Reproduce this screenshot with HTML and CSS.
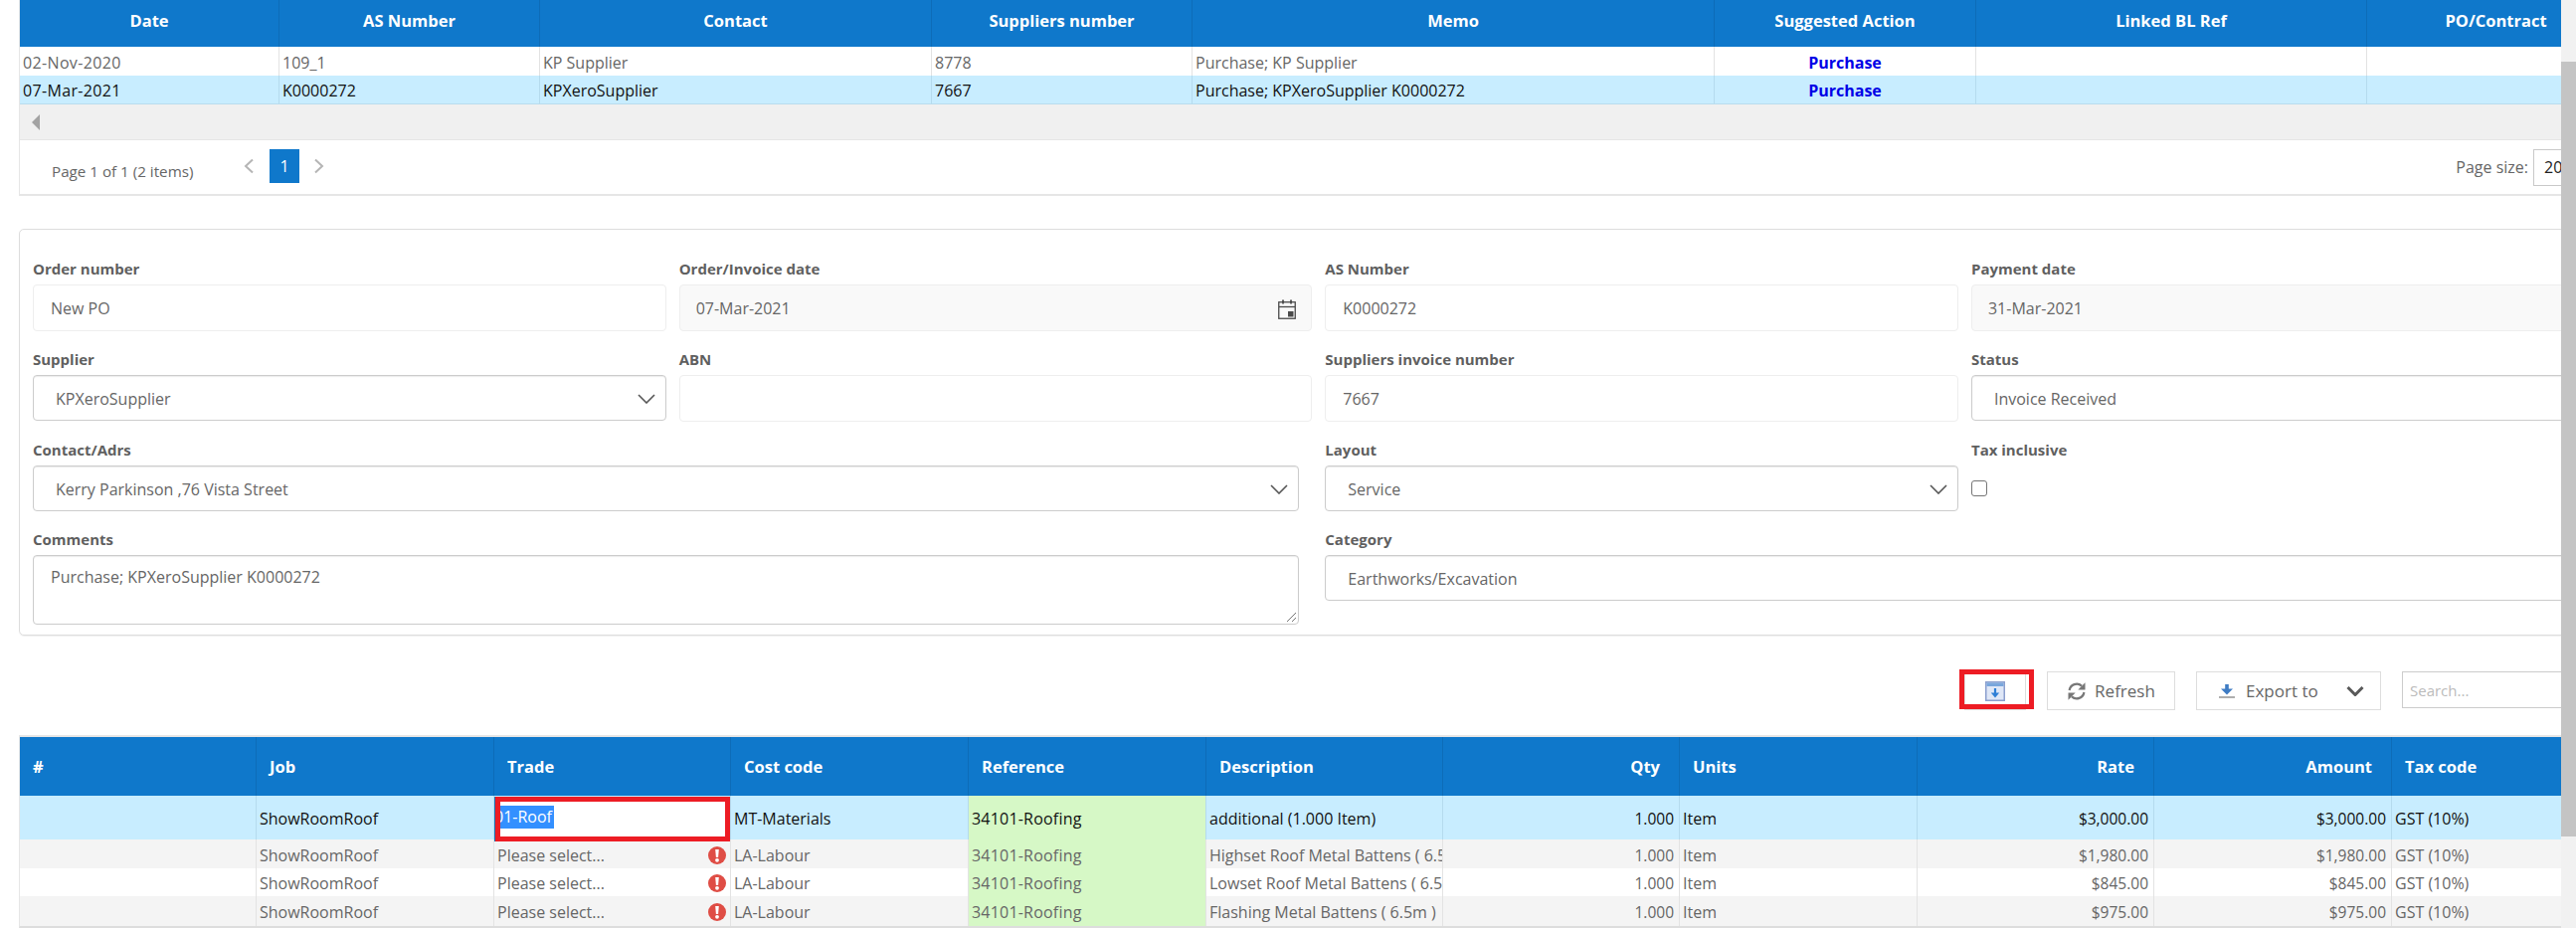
FILE: index.html
```html
<!DOCTYPE html>
<html lang="en">
<head>
<meta charset="utf-8">
<title>Purchase order</title>
<link rel="stylesheet" href="styles.css">
</head>
<body>
<div class="app">
  <main class="page">
    <section class="top-grid">
      <div class="row top-cols head head-top">
        <div class="c center">Date</div><div class="c center">AS Number</div><div class="c center">Contact</div><div class="c center">Suppliers number</div><div class="c center">Memo</div><div class="c center">Suggested Action</div><div class="c center">Linked BL Ref</div><div class="c center">PO/Contract</div>
      </div>
      <div class="row top-cols body-row plain r29">
        <div class="c date">02-Nov-2020</div><div class="c">109_1</div><div class="c">KP Supplier</div><div class="c">8778</div><div class="c">Purchase; KP Supplier</div><div class="c center action">Purchase</div><div class="c"></div><div class="c"></div>
      </div>
      <div class="row top-cols body-row selected r29 last">
        <div class="c date">07-Mar-2021</div><div class="c">K0000272</div><div class="c">KPXeroSupplier</div><div class="c">7667</div><div class="c">Purchase; KPXeroSupplier K0000272</div><div class="c center action">Purchase</div><div class="c"></div><div class="c"></div>
      </div>
      <div class="hscroll"><span class="tri"></span></div>
      <div class="pager">
        <span class="pager-info">Page 1 of 1 (2 items)</span>
        <svg class="pg-chev" viewBox="0 0 12 16"><path d="M10 1.5L3 8l7 6.5"/></svg>
        <span class="pg-num">1</span>
        <svg class="pg-chev" viewBox="0 0 12 16"><path d="M2 1.5L9 8l-7 6.5"/></svg>
        <span class="pg-size">Page size:</span>
        <span class="pg-select">20</span>
      </div>
    </section>

    <section class="card">
      <div class="field"><label>Order number</label><div class="inp h47 plainbox">New PO</div></div>
      <div class="field"><label>Order/Invoice date</label><div class="inp h47 disabled">07-Mar-2021
        <svg class="cal" viewBox="0 0 18 20"><rect x="0.75" y="2.75" width="16.5" height="16.5" fill="none" stroke="#4a4a4a" stroke-width="1.3"/><path d="M1 7.5h16" stroke="#4a4a4a" stroke-width="1.3"/><path d="M5 0.5v4M13 0.5v4" stroke="#4a4a4a" stroke-width="1.8"/><rect x="10" y="12" width="5.5" height="5.5" fill="#4a4a4a"/></svg>
      </div></div>
      <div class="field"><label>AS Number</label><div class="inp h47 plainbox">K0000272</div></div>
      <div class="field"><label>Payment date</label><div class="inp h47 disabled">31-Mar-2021</div></div>

      <div class="field"><label>Supplier</label><div class="inp h46 sel">KPXeroSupplier<svg class="chev" viewBox="0 0 18 10"><path d="M1 1l8 8 8-8"/></svg></div></div>
      <div class="field"><label>ABN</label><div class="inp h47 plainbox"></div></div>
      <div class="field"><label>Suppliers invoice number</label><div class="inp h47 plainbox">7667</div></div>
      <div class="field"><label>Status</label><div class="inp h46 sel">Invoice Received</div></div>

      <div class="field wide"><label>Contact/Adrs</label><div class="inp h46 sel">Kerry Parkinson ,76 Vista Street<svg class="chev" viewBox="0 0 18 10"><path d="M1 1l8 8 8-8"/></svg></div></div>
      <div class="field"><label>Layout</label><div class="inp h46 sel">Service<svg class="chev" viewBox="0 0 18 10"><path d="M1 1l8 8 8-8"/></svg></div></div>
      <div class="field"><label>Tax inclusive</label><div class="check-wrap"><span class="check"></span></div></div>

      <div class="field wide"><label>Comments</label><div class="inp area">Purchase; KPXeroSupplier K0000272
        <svg class="grip" viewBox="0 0 12 12"><path d="M11 2L2 11M11 7l-4 4"/></svg>
      </div></div>
      <div class="field span2"><label>Category</label><div class="inp h46 sel">Earthworks/Excavation</div></div>
    </section>

    <section class="toolbar">
      <div class="btn btn-save">
        <svg class="save" viewBox="0 0 20 20"><rect x="0.75" y="0.75" width="18.5" height="18.5" fill="#dfe7f7" stroke="#8b9fce" stroke-width="1.5"/><rect x="1.5" y="1.5" width="17" height="3.5" fill="#79a6dc"/><path d="M10 7v7" stroke="#2f7fd6" stroke-width="2.2"/><path d="M5.8 11.5h8.4L10 16.5z" fill="#2f7fd6"/></svg>
        <span class="annot"></span>
      </div>
      <div class="btn btn-refresh">
        <svg class="refresh" viewBox="0 0 20 20"><path d="M2.6 9A7.5 7.5 0 0 1 15 4.6" fill="none" stroke="#777" stroke-width="2.2"/><path d="M18.5 1.2v7.2h-7.2z" fill="#777"/><path d="M17.4 11A7.5 7.5 0 0 1 5 15.4" fill="none" stroke="#777" stroke-width="2.2"/><path d="M1.5 18.8v-7.2h7.2z" fill="#777"/></svg>
        Refresh
      </div>
      <div class="btn btn-export">
        <svg class="export" viewBox="0 0 16 14"><path d="M8 0v5" stroke="#3f7cc4" stroke-width="3.6"/><path d="M2 4.5h12L8 10.5z" fill="#3f7cc4"/><path d="M0 13h16" stroke="#9a9a9a" stroke-width="1.6"/></svg>
        <span class="export-label">Export to</span>
        <svg class="chev-bold" viewBox="0 0 18 10"><path d="M1.5 1L9 8.5 16.5 1"/></svg>
      </div>
      <div class="search">Search...</div>
    </section>

    <section class="lines">
      <div class="row line-cols head head-lines">
        <div class="c hp">#</div><div class="c hp">Job</div><div class="c hp">Trade</div><div class="c hp">Cost code</div><div class="c hp">Reference</div><div class="c hp">Description</div><div class="c hp right">Qty</div><div class="c hp">Units</div><div class="c hp right">Rate</div><div class="c hp right">Amount</div><div class="c hp">Tax code</div>
      </div>
      <div class="row line-cols body-row selected r44">
        <div class="c"></div><div class="c">ShowRoomRoof</div>
        <div class="c trade"><div class="editor"><span class="sel-text"><span class="sel-inner">01-Roof</span></span></div></div>
        <div class="c">MT-Materials</div><div class="c ref">34101-Roofing</div><div class="c">additional (1.000 Item)</div><div class="c rt">1.000</div><div class="c">Item</div><div class="c rt">$3,000.00</div><div class="c rt">$3,000.00</div><div class="c">GST (10%)</div>
      </div>
      <div class="row line-cols body-row grey r29">
        <div class="c"></div><div class="c">ShowRoomRoof</div>
        <div class="c between">Please select...<svg class="err" viewBox="0 0 18 18"><circle cx="9" cy="9" r="9" fill="#df4d45"/><path d="M7.2 3h3.6l-.7 8H7.9z" fill="#fff"/><circle cx="9" cy="13.8" r="1.9" fill="#fff"/></svg></div>
        <div class="c">LA-Labour</div><div class="c ref">34101-Roofing</div><div class="c">Highset Roof Metal Battens ( 6.5m )</div><div class="c rt">1.000</div><div class="c">Item</div><div class="c rt">$1,980.00</div><div class="c rt">$1,980.00</div><div class="c">GST (10%)</div>
      </div>
      <div class="row line-cols body-row plain r28">
        <div class="c"></div><div class="c">ShowRoomRoof</div>
        <div class="c between">Please select...<svg class="err" viewBox="0 0 18 18"><circle cx="9" cy="9" r="9" fill="#df4d45"/><path d="M7.2 3h3.6l-.7 8H7.9z" fill="#fff"/><circle cx="9" cy="13.8" r="1.9" fill="#fff"/></svg></div>
        <div class="c">LA-Labour</div><div class="c ref">34101-Roofing</div><div class="c">Lowset Roof Metal Battens ( 6.5m )</div><div class="c rt">1.000</div><div class="c">Item</div><div class="c rt">$845.00</div><div class="c rt">$845.00</div><div class="c">GST (10%)</div>
      </div>
      <div class="row line-cols body-row grey r30">
        <div class="c"></div><div class="c">ShowRoomRoof</div>
        <div class="c between">Please select...<svg class="err" viewBox="0 0 18 18"><circle cx="9" cy="9" r="9" fill="#df4d45"/><path d="M7.2 3h3.6l-.7 8H7.9z" fill="#fff"/><circle cx="9" cy="13.8" r="1.9" fill="#fff"/></svg></div>
        <div class="c">LA-Labour</div><div class="c ref">34101-Roofing</div><div class="c">Flashing Metal Battens ( 6.5m )</div><div class="c rt">1.000</div><div class="c">Item</div><div class="c rt">$975.00</div><div class="c rt">$975.00</div><div class="c">GST (10%)</div>
      </div>
    </section>
  </main>
  <aside class="vscroll"><div class="vthumb"></div></aside>
</div>
</body>
</html>
```
FILE: styles.css
```css
* { box-sizing: border-box; }
html, body { margin: 0; height: 933px; overflow: hidden; background: #fff; }
body { font-family: "Open Sans", "Noto Sans", sans-serif; font-size: 16px; color: #666; }

.app { display: flex; width: 2590px; height: 933px; }
.page { width: 2575px; height: 933px; overflow: hidden; padding-left: 19px; flex: none; }
.vscroll { width: 15px; flex: none; background: #f1f1f1; padding-top: 62px; }
.vthumb { height: 779px; background: #c4c4c4; }

.row { display: grid; width: 2621px; }
.top-cols { grid-template-columns: 261px 262px 394px 262px 525px 263px 393px 260px; }
.line-cols { grid-template-columns: 238px 239px 238px 239px 239px 238px 238px 239px 238px 239px 235px; }

.c { display: flex; align-items: center; min-width: 0; padding: 0 3px; white-space: nowrap; overflow: hidden; border-right: 1px solid #e3e3e3; }
.body-row .c { padding-top: 2px; }
.date { letter-spacing: .35px; }
.center { justify-content: center; }
.right { justify-content: flex-end; }
.rt { justify-content: flex-end; padding-right: 5px; font-size: 15.5px; }
.between { justify-content: space-between; padding-right: 4px; }

.head { background: #0f78cb; color: #fff; font-weight: 700; font-size: 16.5px; }
.head .c { border-right-color: #0d6cb8; }
.head-top { height: 47px; }
.head-top .c { padding-bottom: 6px; }
.head-lines { height: 59px; }
.hp { padding-left: 13px; padding-right: 19px; padding-bottom: 0; }

.plain { background: #fff; }
.grey { background: #f4f4f4; }
.selected { background: #c8edff; color: #111; }
.selected .c { border-right-color: #b5dbee; }
.r28 { height: 28px; }
.r29 { height: 29px; }
.r30 { height: 30px; }
.r44 { height: 44px; }
.last { height: 29px; border-bottom: 1px solid #b9dced; }
.action { color: #0000e6; font-weight: 700; }

.top-grid { width: 2621px; border-left: 1px solid #e6e6e6; }
.hscroll { height: 36px; background: #f0f0f0; border-bottom: 1px solid #e6e6e6; display: flex; align-items: center; padding-left: 12px; }
.tri { width: 0; height: 0; border-style: solid; border-width: 8px 8px 8px 0; border-color: transparent #a3a3a3 transparent transparent; }
.pager { height: 56px; display: flex; align-items: center; border-bottom: 2px solid #e6e6e6; padding-left: 32px; }
.pager-info { width: 192px; padding-top: 7px; font-size: 15.2px; }
.pg-chev { width: 12px; height: 16px; fill: none; stroke: #b5b5b5; stroke-width: 2; margin-top: -2px; }
.pg-num { width: 30px; height: 34px; background: #0f78cb; color: #fff; display: flex; align-items: center; justify-content: center; margin: -2px 14px 0 15px; }
.pg-size { margin-left: auto; }
.pg-select { width: 93px; height: 37px; margin-left: 5px; padding-left: 10px; border: 1px solid #c9c9c9; color: #222; display: flex; align-items: center; }

.card { width: 2621px; margin-top: 33px; height: 409px; border: 1px solid #ddd; border-radius: 5px; padding: 29px 13px 0; display: grid; grid-template-columns: repeat(4, 636.67px); column-gap: 13px; row-gap: 18px; align-content: start; box-shadow: 0 1px 1px rgba(0,0,0,.06); }
.field { min-width: 0; }
.wide { grid-column: span 2; padding-right: 13px; }
.span2 { grid-column: span 2; }
label { display: block; height: 20px; margin-bottom: 6px; line-height: 20px; font-weight: 700; font-size: 15px; color: #5f5f5f; }
.inp { position: relative; display: flex; align-items: center; border-radius: 4px; background: #fff; color: #666; }
.h47 { height: 47px; padding-top: 1px; }
.h46 { height: 46px; padding-top: 1px; }
.plainbox { border: 1px solid #eee; padding-left: 17px; }
.disabled { border: 1px solid #eee; background: #f9f9f9; padding-left: 16px; }
.sel { border: 1px solid #ccc; box-shadow: inset 0 1px 1px rgba(0,0,0,.08); padding-left: 22px; padding-right: 10px; justify-content: space-between; }
.area { height: 70px; border: 1px solid #ccc; box-shadow: inset 0 1px 1px rgba(0,0,0,.08); padding: 10px 17px; align-items: flex-start; }
.chev { width: 18px; height: 10px; fill: none; stroke: #555; stroke-width: 1.6; }
.cal { position: absolute; right: 15px; top: 14px; width: 18px; height: 20px; }
.grip { position: absolute; right: 1px; bottom: 1px; width: 12px; height: 12px; fill: none; stroke: #777; stroke-width: 1; }
.check-wrap { height: 46px; display: flex; align-items: center; }
.check { width: 16px; height: 16px; border: 1.5px solid #767676; border-radius: 3px; background: #fff; }

.toolbar { width: 2621px; margin-top: 36px; display: flex; justify-content: flex-end; gap: 21px; height: 39px; }
.btn { position: relative; display: flex; align-items: center; justify-content: center; height: 39px; border: 1px solid #ddd; background: #fff; color: #666; font-size: 17px; }
.btn-save { width: 62px; }
.btn-refresh { width: 129px; gap: 8px; }
.btn-export { width: 186px; padding-left: 22px; justify-content: flex-start; }
.export-label { margin-left: 11px; }
.save { width: 20px; height: 20px; }
.refresh { width: 20px; height: 20px; }
.export { width: 16px; height: 14px; }
.chev-bold { width: 18px; height: 10px; margin-left: 28px; fill: none; stroke: #595959; stroke-width: 3; }
.annot { position: absolute; left: -6px; top: -3px; width: 75px; height: 40px; border: 5px solid #ed1c24; }
.search { width: 225px; height: 37px; border: 1px solid #ccc; padding-left: 7px; display: flex; align-items: center; color: #bbb; font-size: 15px; }

.lines { width: 2621px; margin-top: 25px; border-top: 2px solid #e6e6e6; border-left: 1px solid #e6e6e6; border-bottom: 2px solid #ddd; }
.lines .row { width: 2620px; }
.ref { background: #d6f8c6; letter-spacing: .2px; }
.body-row .trade { position: relative; overflow: visible; padding: 0; z-index: 1; }
.editor { position: absolute; left: 1px; top: 1px; width: 236px; height: 45px; background: #fff; border: 5px solid #ed1c24; overflow: hidden; box-shadow: -1px 0 0 #1f6fb0; }
.sel-text { display: block; margin-top: 4px; height: 23px; overflow: hidden; width: 54px; background: #3390ff; color: #fff; line-height: 23px; }
.sel-inner { display: block; margin-left: -6px; }
.err { width: 18px; height: 18px; flex: none; }
```
